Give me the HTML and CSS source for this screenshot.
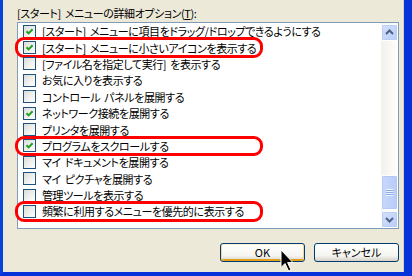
FILE: index.html
```html
<!DOCTYPE html>
<html>
  <head>
    <title>[スタート] メニューの詳細オプション</title>
    <link rel="stylesheet" href="styles.css">
  </head>
  <body>
    <div class="dialog">
      <div class="caption">[スタート] メニューの詳細オプション(<u>T</u>):</div>

      <div class="listbox">
        <ul class="items">
          <li class="item"><span class="box"><svg viewBox="0 0 11 11"><path d="M2.5 5.2 L4.6 7.4 L8.6 3.2" /></svg></span>[スタート] メニューに項目をドラッグ/ドロップできるようにする</li>
          <li class="item marked"><span class="box"><svg viewBox="0 0 11 11"><path d="M2.5 5.2 L4.6 7.4 L8.6 3.2" /></svg></span>[スタート] メニューに小さいアイコンを表示する</li>
          <li class="item"><span class="box"></span>[ファイル名を指定して実行] を表示する</li>
          <li class="item"><span class="box"></span>お気に入りを表示する</li>
          <li class="item"><span class="box"></span>コントロール パネルを展開する</li>
          <li class="item"><span class="box"><svg viewBox="0 0 11 11"><path d="M2.5 5.2 L4.6 7.4 L8.6 3.2" /></svg></span>ネットワーク接続を展開する</li>
          <li class="item"><span class="box"></span>プリンタを展開する</li>
          <li class="item marked"><span class="box"><svg viewBox="0 0 11 11"><path d="M2.5 5.2 L4.6 7.4 L8.6 3.2" /></svg></span>プログラムをスクロールする</li>
          <li class="item"><span class="box"></span>マイ ドキュメントを展開する</li>
          <li class="item"><span class="box"></span>マイ ピクチャを展開する</li>
          <li class="item"><span class="box"></span>管理ツールを表示する</li>
          <li class="item marked"><span class="box"></span>頻繁に利用するメニューを優先的に表示する</li>
        </ul>

        <div class="scrollbar">
          <div class="sb-btn">
            <svg viewBox="0 0 15 15"><path d="M4 9 L7.5 5.5 L11 9" /></svg>
          </div>
          <div class="sb-track">
            <div class="sb-thumb">
              <span class="grip"></span>
            </div>
          </div>
          <div class="sb-btn">
            <svg viewBox="0 0 15 15"><path d="M4 6 L7.5 9.5 L11 6" /></svg>
          </div>
        </div>
      </div>

      <div class="buttons">
        <button class="btn hover">OK</button>
        <button class="btn">キャンセル</button>
      </div>
    </div>

    <svg class="cursor" viewBox="0 0 14 23" width="14" height="23">
      <path d="M1 1 V18.5 L5 14.5 L8.6 22 L11 21 L7.6 13.6 H13 Z" />
    </svg>
  </body>
</html>
```

FILE: styles.css
```css
body {
  margin: 0;
  width: 412px;
  height: 276px;
  overflow: hidden;
  position: relative;
  font-family: 'Noto Sans CJK JP', 'DejaVu Sans', sans-serif;
  font-size: 11px;
  font-feature-settings: 'palt';
  letter-spacing: -0.4px;
  word-spacing: 2px;
  color: #000;
}

.dialog {
  box-sizing: border-box;
  width: 412px;
  height: 276px;
  background: #ece9d8;
  border-left: 3px solid #0842d8;
  border-right: 8px solid #0831d9;
  border-bottom: 4px solid #0831d9;
  box-shadow: inset -1px 0 0 #d6d2c2;
  padding: 6px 5px 0 14px;
  display: flex;
  flex-direction: column;
}

.caption {
  height: 16px;
  line-height: 15px;
  white-space: nowrap;
}

.caption u {
  text-underline-offset: 1px;
}

.listbox {
  height: 207px;
  box-sizing: border-box;
  border: 1px solid #7f9db9;
  background: #fff;
  display: flex;
}

.items {
  flex: 1;
  list-style: none;
  margin: 0;
  padding: 0;
}

.item {
  position: relative;
  height: 16.4px;
  display: flex;
  align-items: center;
  gap: 6px;
  padding-left: 5px;
  white-space: nowrap;
  line-height: 14px;
}

.marked:after {
  content: '';
  position: absolute;
  left: -3px;
  top: -2px;
  bottom: -2px;
  width: 248px;
  box-sizing: border-box;
  border: 3px solid #ff0000;
  border-radius: 9px;
}

.box {
  flex: none;
  width: 13px;
  height: 13px;
  box-sizing: border-box;
  border: 1px solid #1c5180;
  background: linear-gradient(135deg, #dcdcd7 0%, #f2f2ee 60%, #ffffff 100%);
}

.box svg {
  display: block;
  width: 11px;
  height: 11px;
}

.box path {
  fill: none;
  stroke: #21a121;
  stroke-width: 2;
}

.scrollbar {
  width: 17px;
  display: flex;
  flex-direction: column;
  padding-top: 1px;
  background: linear-gradient(90deg, #f3f1ec, #fefefb);
}

.sb-btn {
  height: 17px;
  box-sizing: border-box;
  border: 1px solid #fff;
  border-radius: 2px;
  background: linear-gradient(135deg, #d4e0fd, #b9cdf7);
  box-shadow: inset 0 0 0 1px #bacdf5;
}

.sb-btn svg {
  display: block;
  width: 15px;
  height: 15px;
}

.sb-btn path {
  fill: none;
  stroke: #4d6185;
  stroke-width: 2;
}

.sb-track {
  flex: 1;
  display: flex;
  flex-direction: column;
  justify-content: flex-end;
  padding-bottom: 1px;
}

.sb-thumb {
  height: 35px;
  box-sizing: border-box;
  border: 1px solid #fff;
  border-radius: 2px;
  background: linear-gradient(90deg, #c9d8fc, #b8cbf7);
  box-shadow: inset 0 0 0 1px #b4c8f6;
  display: flex;
  align-items: center;
  justify-content: center;
}

.grip {
  width: 7px;
  height: 7px;
  background: repeating-linear-gradient(180deg, #eef4fe 0, #eef4fe 1px, #8ca8e8 1px, #8ca8e8 2px);
}

.buttons {
  display: flex;
  justify-content: flex-end;
  gap: 9px;
  margin-top: 14px;
}

.btn {
  width: 85px;
  height: 19px;
  box-sizing: border-box;
  border: 1px solid #003c74;
  border-radius: 3px;
  background: linear-gradient(180deg, #ffffff 0%, #f4f4f0 70%, #d6d0c5 100%);
  font-family: inherit;
  font-size: 11px;
  font-feature-settings: 'palt';
  letter-spacing: 0;
  color: #000;
  padding: 0;
  line-height: 15px;
}

.btn.hover {
  box-shadow: inset 0 1px 0 #fff0cf, inset 1px 0 0 #fbd68a, inset -1px 0 0 #fbd68a, inset 0 -2px 0 #e5a01a;
}

.cursor {
  position: absolute;
  left: 280px;
  top: 249px;
}

.cursor path {
  fill: #000;
  stroke: #fff;
  stroke-width: 1;
}
```
